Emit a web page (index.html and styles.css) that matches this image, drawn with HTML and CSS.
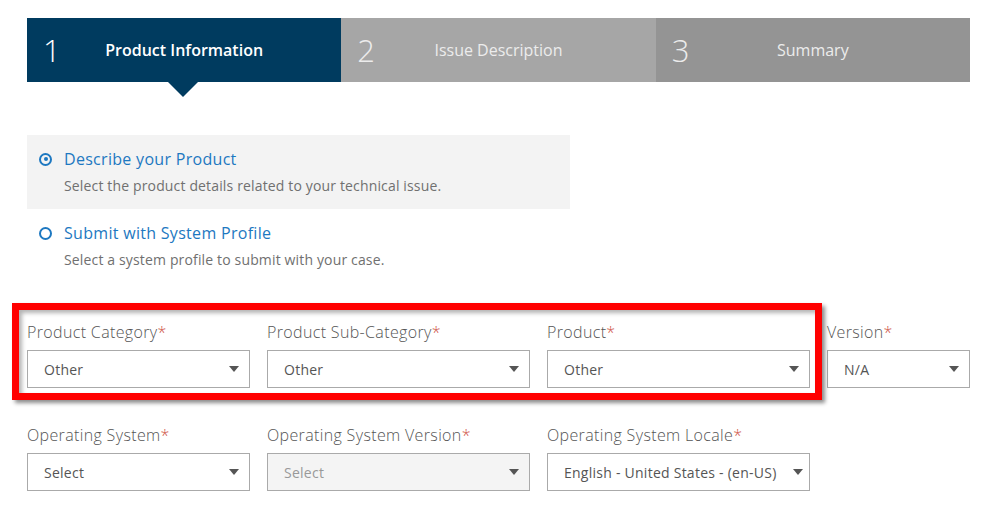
FILE: index.html
```html
<!DOCTYPE html>
<html lang="en">
<head>
<meta charset="utf-8">
<title>Product Information</title>
<link rel="stylesheet" href="styles.css">
</head>
<body>
<div class="page">
  <div class="steps">
    <div class="step active">
      <span class="num">1</span><span class="title">Product Information</span>
    </div>
    <div class="step second">
      <span class="num">2</span><span class="title">Issue Description</span>
    </div>
    <div class="step third">
      <span class="num">3</span><span class="title">Summary</span>
    </div>
  </div>

  <div class="options">
    <div class="option selected">
      <div class="option-head"><span class="radio checked"></span><span class="option-title">Describe your Product</span></div>
      <div class="option-sub">Select the product details related to your technical issue.</div>
    </div>
    <div class="option">
      <div class="option-head"><span class="radio"></span><span class="option-title">Submit with System Profile</span></div>
      <div class="option-sub">Select a system profile to submit with your case.</div>
    </div>
  </div>

  <div class="form">
    <div class="row row-one">
      <div class="highlight"></div>
      <div class="field w1">
        <div class="label">Product Category<span class="req">*</span></div>
        <div class="select"><span>Other</span><span class="caret"></span></div>
      </div>
      <div class="field w2">
        <div class="label">Product Sub-Category<span class="req">*</span></div>
        <div class="select"><span>Other</span><span class="caret"></span></div>
      </div>
      <div class="field w2">
        <div class="label">Product<span class="req">*</span></div>
        <div class="select"><span>Other</span><span class="caret"></span></div>
      </div>
      <div class="field w3">
        <div class="label">Version<span class="req">*</span></div>
        <div class="select"><span>N/A</span><span class="caret"></span></div>
      </div>
    </div>
    <div class="row row-two">
      <div class="field w1">
        <div class="label">Operating System<span class="req">*</span></div>
        <div class="select"><span>Select</span><span class="caret"></span></div>
      </div>
      <div class="field w2">
        <div class="label">Operating System Version<span class="req">*</span></div>
        <div class="select disabled"><span>Select</span><span class="caret"></span></div>
      </div>
      <div class="field w2">
        <div class="label">Operating System Locale<span class="req">*</span></div>
        <div class="select locale"><span>English - United States - (en-US)</span><span class="caret"></span></div>
      </div>
    </div>
  </div>
</div>
</body>
</html>
```

FILE: styles.css
```css
* { box-sizing: border-box; }
html, body { margin: 0; padding: 0; background: #fff; }
body {
  font-family: "Open Sans", "Noto Sans", sans-serif;
  color: #555;
  width: 997px;
  height: 512px;
  overflow: hidden;
}
.page {
  padding: 18px 0 0 27px;
  width: 970px;
}

/* Steps */
.steps {
  display: flex;
  height: 64px;
  width: 943px;
}
.step {
  position: relative;
  flex: 0 0 314.33px;
  display: flex;
  align-items: center;
  justify-content: center;
  color: #ececec;
}
.step.active { background: #003b5f; color: #fff; }
.step.second { background: #a6a6a6; }
.step.third { background: #949494; }
.step .num {
  position: absolute;
  left: 16px;
  top: 13px;
  font-size: 31px;
  line-height: 38px;
  font-weight: 300;
}
.step .title {
  font-size: 16px;
  line-height: 22px;
  margin-top: -1px;
}
.step.active .title { font-weight: 600; }
.step.active::after {
  content: "";
  position: absolute;
  left: 141px;
  top: 64px;
  border-left: 15px solid transparent;
  border-right: 15px solid transparent;
  border-top: 15px solid #003b5f;
}

/* Options */
.options {
  margin-top: 53px;
  width: 543px;
}
.option {
  padding: 13px 0 13px 12px;
}
.option.selected { background: #f3f3f3; }
.option-head {
  display: flex;
  align-items: center;
  height: 22px;
}
.radio {
  width: 13px;
  height: 13px;
  border: 2px solid #1d78c1;
  border-radius: 50%;
  margin-right: 12px;
  position: relative;
  flex: none;
}
.radio.checked::after {
  content: "";
  position: absolute;
  left: 2.5px;
  top: 2.5px;
  width: 4px;
  height: 4px;
  border-radius: 50%;
  background: #1d78c1;
}
.option-title {
  font-size: 16px;
  letter-spacing: 0.3px;
  color: #1d78c1;
  line-height: 22px;
}
.option-sub {
  margin-top: 6px;
  margin-left: 25px;
  font-size: 14px;
  letter-spacing: 0.15px;
  line-height: 20px;
  color: #707070;
}

/* Form */
.form { margin-top: 38px; }
.row {
  display: flex;
  gap: 17px;
  position: relative;
}
.row-two { margin-top: 36px; }
.w1 { width: 223px; }
.w2 { width: 263px; }
.w3 { width: 143px; }
.label {
  font-size: 16px;
  font-weight: 300;
  letter-spacing: 0.35px;
  line-height: 22px;
  color: #555;
  margin-bottom: 7px;
  white-space: nowrap;
}
.req { color: #d0574a; }
.select {
  height: 38px;
  border: 1px solid #aaa;
  background: #fff;
  display: flex;
  align-items: center;
  justify-content: space-between;
  padding: 0 10px 0 16px;
  font-size: 14px;
  letter-spacing: 0.25px;
  color: #555;
  white-space: nowrap;
}
.select.disabled { background: #f4f4f4; color: #999; }
.select.locale { padding-right: 6px; }
.caret {
  width: 0;
  height: 0;
  border-left: 5px solid transparent;
  border-right: 5px solid transparent;
  border-top: 6px solid #555;
  flex: none;
}

/* Annotation box */
.highlight {
  position: absolute;
  left: -15px;
  top: -18px;
  width: 810px;
  height: 97px;
  border: 7px solid #ff0000;
  box-shadow: 3px 3px 4px rgba(0,0,0,0.45), inset 3px 3px 4px rgba(0,0,0,0.3);
  pointer-events: none;
  z-index: 2;
}
```
